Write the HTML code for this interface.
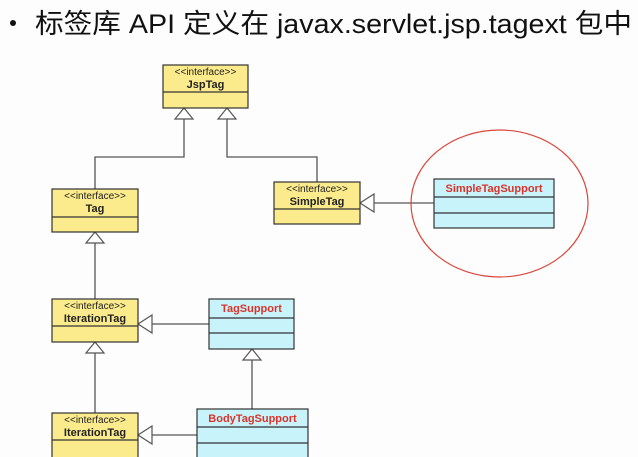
<!DOCTYPE html>
<html><head><meta charset="utf-8"><style>
html,body{margin:0;padding:0;background:#fdfdfd;}
svg{display:block}
</style></head><body>
<svg width="638" height="457" viewBox="0 0 638 457" xmlns="http://www.w3.org/2000/svg" font-family="Liberation Sans, Arial, sans-serif">
<rect width="638" height="457" fill="#fdfdfd"/>
<circle cx="13" cy="23" r="3" fill="#111"/>
<text x="35" y="33" font-size="27" fill="#111" textLength="597" lengthAdjust="spacingAndGlyphs" font-family="Liberation Sans, Noto Sans CJK SC, sans-serif">标签库 API 定义在 javax.servlet.jsp.tagext 包中</text>

<g stroke="#555" stroke-width="1.3" fill="none">
<polyline points="184,119 184,157 95,157 95,189"/>
<polyline points="227,119 227,157 317,157 317,182"/>
<line x1="95" y1="243" x2="95" y2="300"/>
<line x1="95" y1="353" x2="95" y2="413"/>
<line x1="252" y1="360" x2="252" y2="409"/>
<line x1="152" y1="324" x2="209" y2="324"/>
<line x1="152" y1="435" x2="197" y2="435"/>
<line x1="374" y1="203" x2="434" y2="203"/>
</g>
<g stroke="#555" stroke-width="1.2" fill="#fff">
<polygon points="184,108 175,119 193,119"/>
<polygon points="227,108 218,119 236,119"/>
<polygon points="95,232 86,243 104,243"/>
<polygon points="95,342 86,353 104,353"/>
<polygon points="252,349 243,360 261,360"/>
<polygon points="138,324 152,315 152,333"/>
<polygon points="138,435 152,426 152,444"/>
<polygon points="360,203 374,194 374,212"/>
</g>

<ellipse cx="499.5" cy="203.5" rx="88.5" ry="73.5" fill="none" stroke="#d9483b" stroke-width="1.2"/>

<g stroke="#333" stroke-width="1.2" fill="#fbeb8c">
<rect x="163" y="65" width="85" height="43"/><line x1="163" y1="92" x2="248" y2="92"/>
<rect x="52" y="189" width="86" height="43"/><line x1="52" y1="217" x2="138" y2="217"/>
<rect x="274" y="182" width="86" height="42"/><line x1="274" y1="209" x2="360" y2="209"/>
<rect x="52" y="299" width="86" height="43"/><line x1="52" y1="326" x2="138" y2="326"/>
<rect x="52" y="413" width="86" height="50"/><line x1="52" y1="440" x2="138" y2="440"/>
</g>
<g stroke="#333" stroke-width="1.2" fill="#c9f3fb">
<rect x="434" y="179" width="120" height="49"/><line x1="434" y1="197" x2="554" y2="197"/><line x1="434" y1="213" x2="554" y2="213"/>
<rect x="209" y="299" width="85" height="50"/><line x1="209" y1="318" x2="294" y2="318"/><line x1="209" y1="333" x2="294" y2="333"/>
<rect x="197" y="409" width="111" height="55"/><line x1="197" y1="427" x2="308" y2="427"/><line x1="197" y1="443" x2="308" y2="443"/>
</g>

<g font-size="10" fill="#222" text-anchor="middle">
<text x="205.5" y="75">&lt;&lt;interface&gt;&gt;</text>
<text x="95" y="199">&lt;&lt;interface&gt;&gt;</text>
<text x="317" y="192">&lt;&lt;interface&gt;&gt;</text>
<text x="95" y="309">&lt;&lt;interface&gt;&gt;</text>
<text x="95" y="423">&lt;&lt;interface&gt;&gt;</text>
</g>
<g font-size="11" font-weight="bold" fill="#222" text-anchor="middle">
<text x="205.5" y="88">JspTag</text>
<text x="95" y="212">Tag</text>
<text x="317" y="205">SimpleTag</text>
<text x="95" y="322">IterationTag</text>
<text x="95" y="436">IterationTag</text>
</g>
<g font-size="11" font-weight="bold" fill="#d9342b" text-anchor="middle">
<text x="494" y="192">SimpleTagSupport</text>
<text x="251.5" y="312">TagSupport</text>
<text x="252.5" y="422">BodyTagSupport</text>
</g>
</svg>
</body></html>
